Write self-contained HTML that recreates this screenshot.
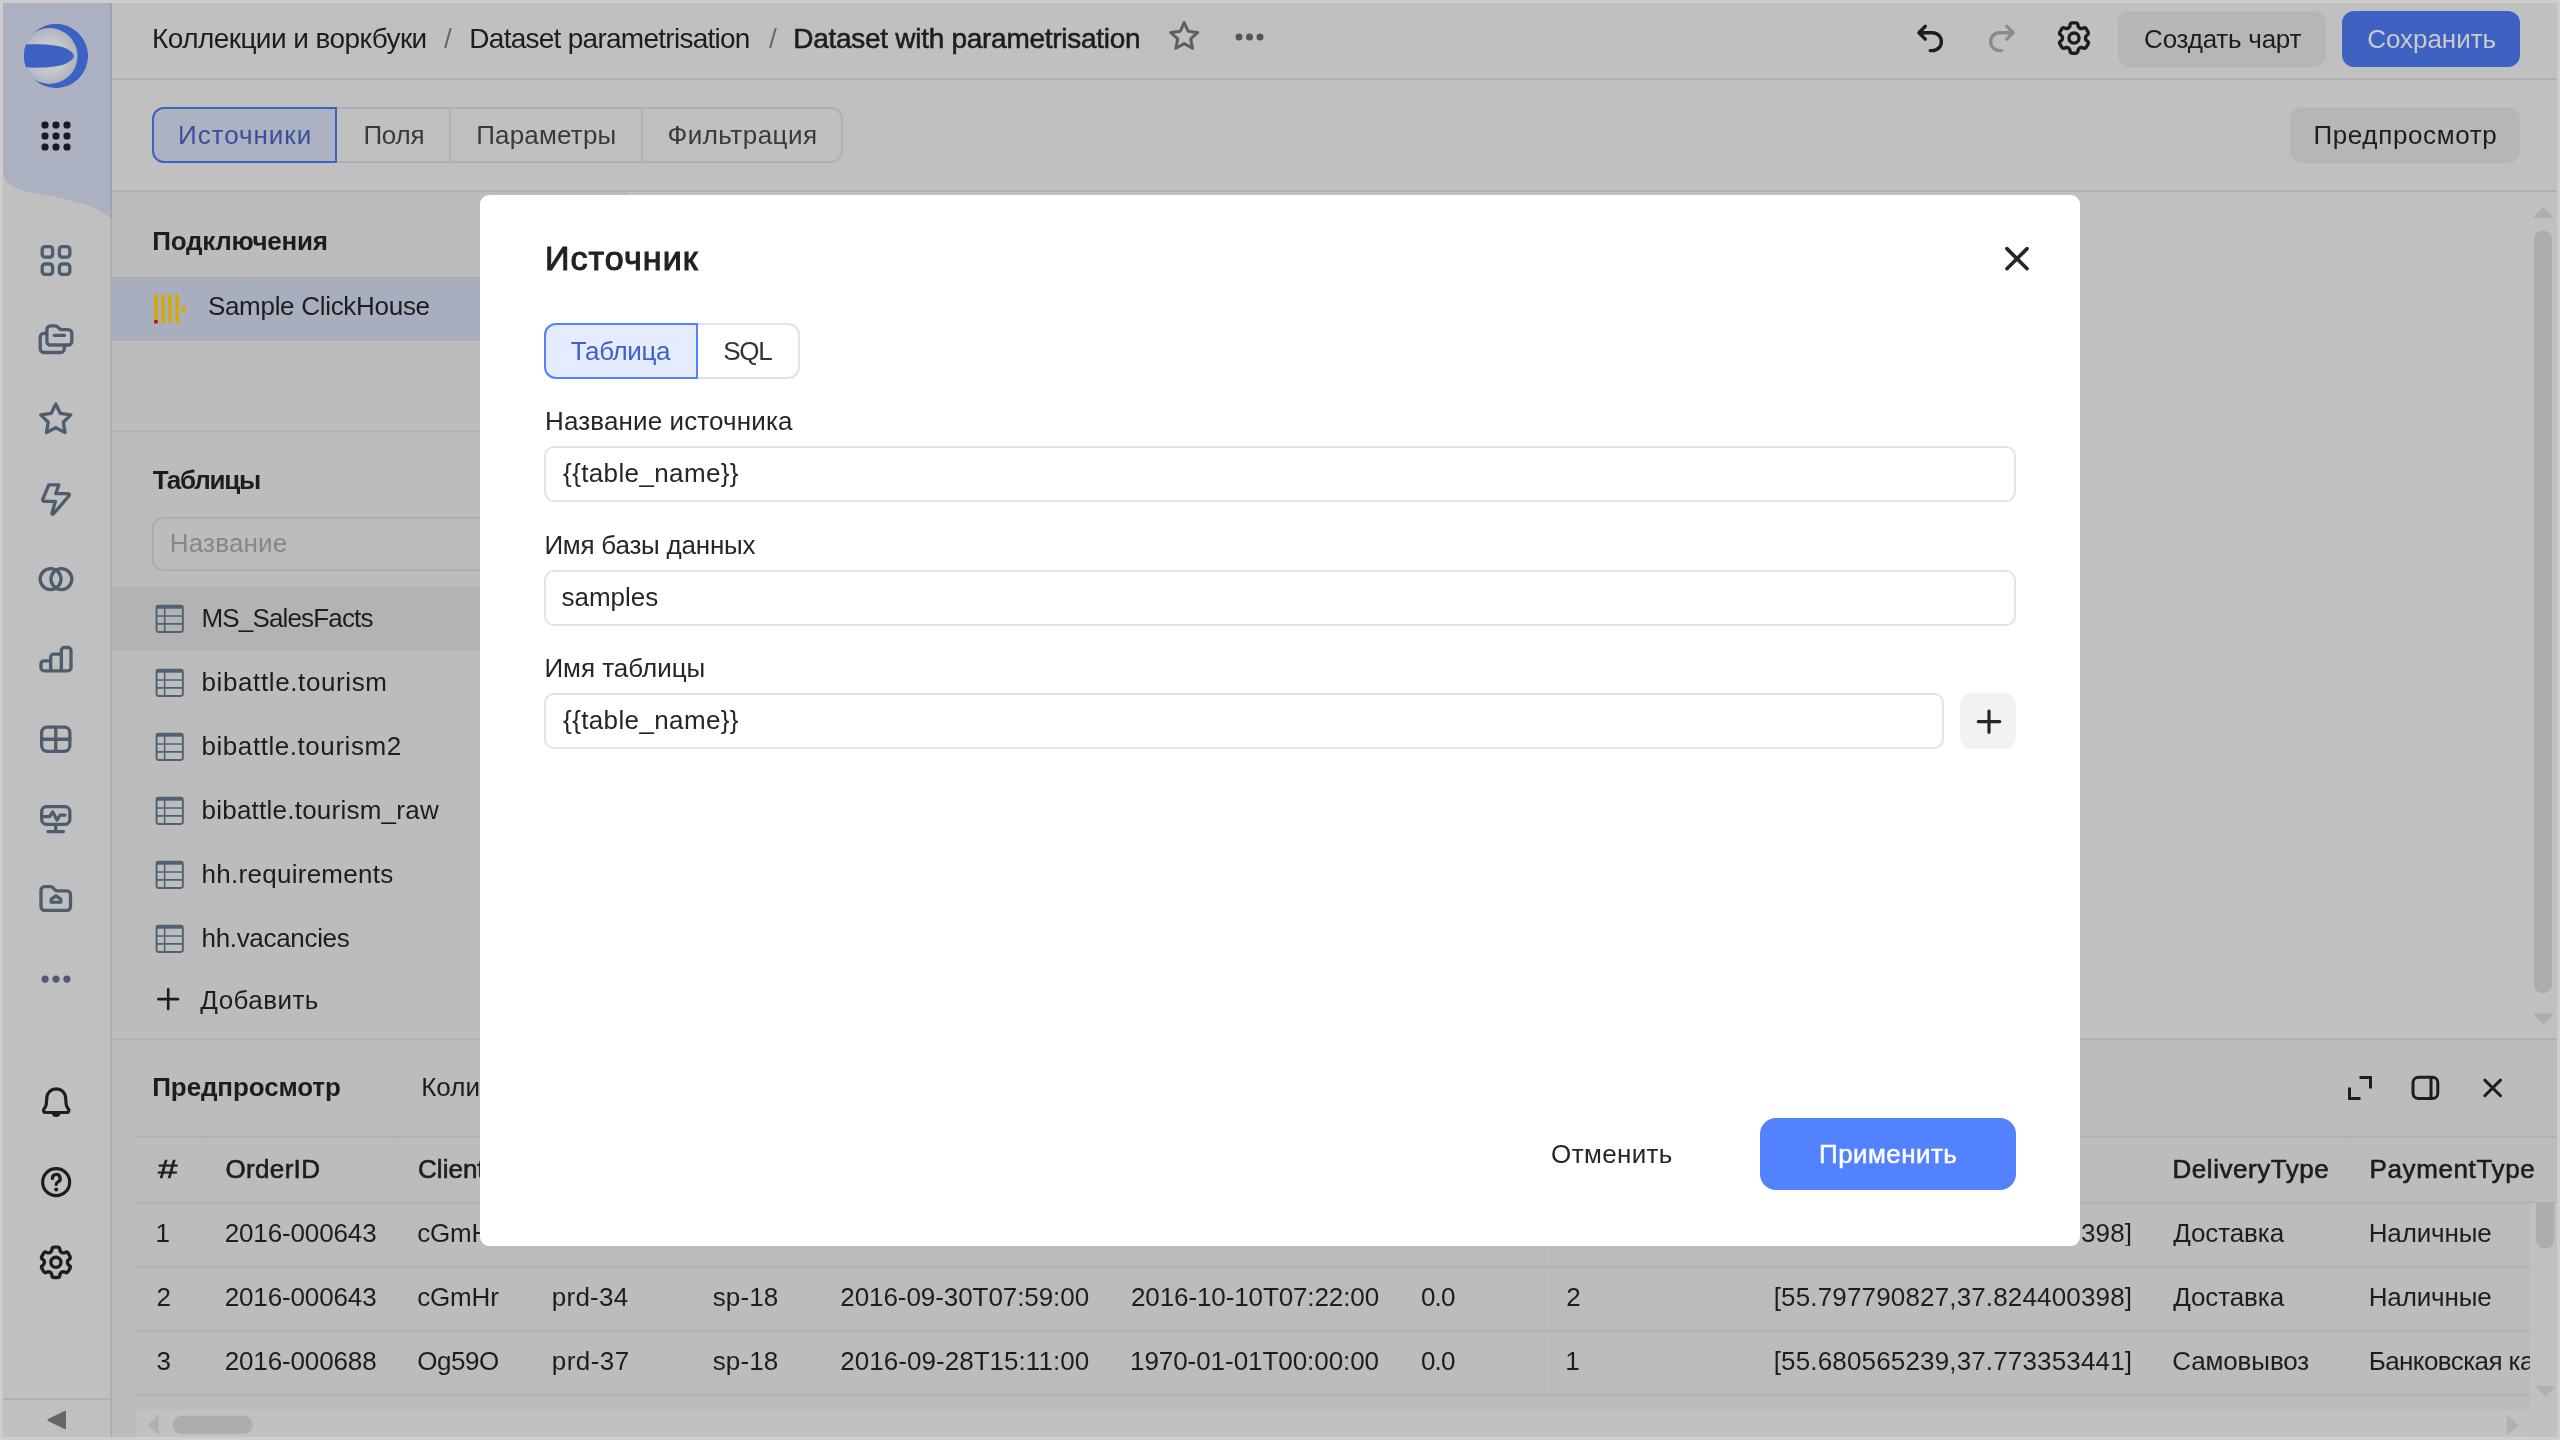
<!DOCTYPE html>
<html lang="ru">
<head>
<meta charset="utf-8">
<title>DataLens — Dataset with parametrisation</title>
<style>
html,body{margin:0;padding:0}
body{width:2560px;height:1440px;position:relative;overflow:hidden;background:#c0c0c0;font-family:"Liberation Sans",sans-serif;-webkit-font-smoothing:antialiased}
.a{position:absolute}
.t{position:absolute;white-space:pre;font-family:"Liberation Sans",sans-serif}
#app,#modal-layer,#frame{position:absolute;left:0;top:0;width:2560px;height:1440px}
#app{overflow:hidden}
.hl{position:absolute;height:2px;background:linear-gradient(#b7b7b7 50%,#adadad 50%)}
.hl2{position:absolute;height:2px;background:linear-gradient(#adadad 50%,#b8b8b8 50%)}
.vl{position:absolute;width:2px;background:#b2b2b2}
.btn{position:absolute;border-radius:12px;background:#b6b6b6}
svg{position:absolute;overflow:visible}
.ico{fill:none;stroke:#4d5c6e;stroke-width:3.3;stroke-linecap:round;stroke-linejoin:round}
.icd{fill:none;stroke:#1d1d1d;stroke-width:3.2;stroke-linecap:round;stroke-linejoin:round}
.inp{position:absolute;box-sizing:border-box;border:2px solid #e3e3e3;border-radius:10px;background:#fff}
</style>
</head>
<body>
<div id="app" style="will-change:transform">
<!-- ===== main backgrounds ===== -->
<div class="a" style="left:112px;top:192px;width:513px;height:848px;background:#bcbcbc"></div>
<div class="a" style="left:112px;top:1040px;width:2448px;height:400px;background:#bcbcbc"></div>

<!-- ===== aside ===== -->
<div class="a" style="left:0;top:0;width:111px;height:1440px;background:#c0c0c0"></div>
<svg class="a" style="left:0;top:0" width="112" height="1440" viewBox="0 0 112 1440">
  <defs>
    <radialGradient id="lg" cx="0.5" cy="0.5" r="0.55"><stop offset="0" stop-color="#cfcfcf"/><stop offset="0.55" stop-color="#c4c5c9"/><stop offset="1" stop-color="#a9aebd"/></radialGradient>
    <clipPath id="lc"><circle cx="56" cy="56" r="32.2"/></clipPath>
  </defs>
  <path d="M0 0H111V218.5C100 209 86 203.500 62 198.500C38 193.500 22 192 12 186C6 182 3 177 3 170V0Z" fill="#abb1c1"/>
  <rect x="110" y="0" width="1" height="218" fill="#a3a9b9"/><rect x="111" y="0" width="1" height="218" fill="#9aa0b0"/>
  <rect x="110" y="218" width="1" height="1222" fill="#b6b6b6"/><rect x="111" y="218" width="1" height="1222" fill="#ababab"/>
  <!-- logo -->
  <g clip-path="url(#lc)">
    <circle cx="56" cy="56" r="32.2" fill="#3e62c4"/>
    <circle cx="49.500" cy="56" r="28" fill="url(#lg)"/>
    <path d="M22 44.800C40 43.600 60 44.500 68 49.500C72 52 74 54 74 56C74 58 72 60 68 62.500C60 67.500 40 68.400 22 67.200Z" fill="#3e62c4"/>
  </g>
  <!-- 9 dots -->
  <g fill="#1a1a1a">
    <rect x="41.500" y="121.500" width="7" height="7" rx="3.100"/><rect x="52.500" y="121.500" width="7" height="7" rx="3.100"/><rect x="63.500" y="121.500" width="7" height="7" rx="3.100"/>
    <rect x="41.500" y="132.500" width="7" height="7" rx="3.100"/><rect x="52.500" y="132.500" width="7" height="7" rx="3.100"/><rect x="63.500" y="132.500" width="7" height="7" rx="3.100"/>
    <rect x="41.500" y="143.500" width="7" height="7" rx="3.100"/><rect x="52.500" y="143.500" width="7" height="7" rx="3.100"/><rect x="63.500" y="143.500" width="7" height="7" rx="3.100"/>
  </g>
  <!-- 1 grid of 4 -->
  <g class="ico">
    <rect x="42.200" y="246.700" width="10.400" height="10.400" rx="2.800"/><rect x="59.400" y="246.700" width="10.400" height="10.400" rx="2.800"/>
    <rect x="42.200" y="264" width="10.400" height="10.400" rx="2.800"/><rect x="59.400" y="264" width="10.400" height="10.400" rx="2.800"/>
  </g>
  <!-- 2 folders -->
  <g class="ico">
    <path d="M46.900 330V341.500a3.500 3.500 0 0 0 3.500 3.500H68.300a3.500 3.500 0 0 0 3.500-3.500V333.200a3.500 3.500 0 0 0-3.500-3.500H61.500a3 3 0 0 1-2.200-1l-1.700-1.800a3 3 0 0 0-2.200-1H50.400a3.500 3.500 0 0 0-3.500 3.500Z"/>
    <path d="M46 333.300H44a3.800 3.800 0 0 0-3.800 3.800V348.700a3.800 3.800 0 0 0 3.800 3.800H60.500a3.800 3.800 0 0 0 3.800-3.800V346"/>
    <path d="M54.300 335.300H64.500"/>
  </g>
  <!-- 3 star -->
  <path class="ico" d="M55.75 404.00L60.39 413.41L70.78 414.92L63.26 422.24L65.04 432.58L55.75 427.70L46.46 432.58L48.24 422.24L40.72 414.92L51.11 413.41Z"/>
  <!-- 4 bolt -->
  <path class="ico" d="M48.800 484.800H58.900L55.800 493.600H68Q70.200 494 68.900 495.900L53.600 513.800Q51.600 515 52.100 512.800L55.400 501.300H44Q42.200 500.900 42.800 499.100Z"/>
  <!-- 5 circles -->
  <g class="ico"><circle cx="50.600" cy="579.100" r="10.450"/><circle cx="61.400" cy="579.100" r="10.450"/></g>
  <!-- 6 bars -->
  <path class="ico" d="M41 663.800a3 3 0 0 1 3-3H50.700V657.200a3 3 0 0 1 3-3H61.300V650.500a3 3 0 0 1 3-3H68a3 3 0 0 1 3 3V667.800a3 3 0 0 1-3 3H44a3 3 0 0 1-3-3ZM50.700 660.800V670.800M61.300 654.200V670.800"/>
  <!-- 7 grid 2x2 -->
  <g class="ico"><rect x="41.650" y="727.150" width="28.200" height="24.200" rx="5.500"/><path d="M55.750 727.150V751.350M41.650 739.250H69.850"/></g>
  <!-- 8 display pulse -->
  <g class="ico"><rect x="41.650" y="806.650" width="28.200" height="17.700" rx="4.800"/><path d="M55.750 824.350V831.600M48 831.600H63.500M43 816.700H49.500L52.700 812L57 820L60.200 815.200H65"/></g>
  <!-- 9 folder house -->
  <g class="ico"><path d="M41 890.200a3.500 3.500 0 0 1 3.500-3.500H50.500a3.500 3.500 0 0 1 2.600 1.100l1.700 1.900a3.500 3.500 0 0 0 2.600 1.100H67a3.500 3.500 0 0 1 3.500 3.500V906.800a3.500 3.500 0 0 1-3.500 3.500H44.500a3.500 3.500 0 0 1-3.500-3.500Z"/><path d="M51.200 902.200V899.200L56 895.800L60.800 899.200V902.200Z"/></g>
  <!-- 10 dots -->
  <g fill="#4d5c6e"><circle cx="45.100" cy="979.100" r="3.600"/><circle cx="56" cy="979.100" r="3.600"/><circle cx="66.900" cy="979.100" r="3.600"/></g>
  <!-- bell -->
  <path class="icd" d="M56.200 1088.900c-5.300 0-9 3.900-9.400 8.800l-.5 6.200c-.2 2-.9 3.500-2.200 5-1.300 1.500-.4 3.600 1.600 3.600h21c2 0 2.900-2.100 1.600-3.600-1.300-1.500-2-3-2.200-5l-.5-6.200c-.4-4.900-4.100-8.800-9.400-8.800Z"/>
  <path d="M51.800 1113.500a4.500 4.500 0 0 0 8.800 0Z" fill="#1d1d1d"/>
  <!-- help -->
  <circle class="icd" cx="56.150" cy="1182.150" r="13.500"/>
  <path class="icd" d="M52.400 1178.400a3.900 3.900 0 1 1 5.600 3.500c-1.200.6-1.800 1.300-1.800 2.600"/>
  <circle cx="56.200" cy="1189.400" r="2" fill="#1d1d1d"/>
  <!-- gear -->
  <g transform="translate(37.900 1244.350) scale(2.25)"><path fill="#1d1d1d" fill-rule="evenodd" clip-rule="evenodd" d="M7.199 2H8.8a.2.2 0 0 1 .2.2c0 1.808 1.958 2.939 3.524 2.034a.199.199 0 0 1 .271.073l.802 1.388a.199.199 0 0 1-.073.272c-1.566.904-1.566 3.164 0 4.069a.199.199 0 0 1 .073.271l-.802 1.388a.199.199 0 0 1-.271.073C10.958 10.863 9 11.993 9 13.8a.2.2 0 0 1-.199.2H7.2a.199.199 0 0 1-.2-.2c0-1.808-1.958-2.938-3.524-2.034a.199.199 0 0 1-.272-.073l-.8-1.388a.199.199 0 0 1 .072-.271c1.566-.905 1.566-3.165 0-4.07a.199.199 0 0 1-.073-.27l.801-1.389a.199.199 0 0 1 .272-.072C5.042 5.138 7 4.007 7 2.199c0-.11.089-.199.199-.199ZM5.5 2.2c0-.94.76-1.7 1.699-1.700H8.800c.94 0 1.700.76 1.700 1.700a.85.85 0 0 0 1.274.735 1.699 1.699 0 0 1 2.320.622l.802 1.388c.469.813.19 1.851-.622 2.320a.85.85 0 0 0 0 1.472 1.700 1.700 0 0 1 .622 2.320l-.802 1.388a1.699 1.699 0 0 1-2.320.622.85.85 0 0 0-1.274.735c0 .939-.76 1.700-1.699 1.700H7.200a1.700 1.700 0 0 1-1.699-1.700.85.85 0 0 0-1.274-.735 1.698 1.698 0 0 1-2.320-.622l-.802-1.388a1.699 1.699 0 0 1 .622-2.320.85.85 0 0 0 0-1.471 1.699 1.699 0 0 1-.622-2.321l.801-1.388a1.699 1.699 0 0 1 2.320-.622A.85.85 0 0 0 5.500 2.200ZM9.500 8a1.500 1.500 0 1 1-3 0 1.500 1.500 0 0 1 3 0ZM11 8a3 3 0 1 1-6 0 3 3 0 0 1 6 0Z"/></g>
  <!-- footer -->
  <rect x="3" y="1398" width="108" height="1" fill="#b8b8b8"/><rect x="3" y="1399" width="108" height="1" fill="#aeaeae"/>
  <path d="M48.500 1420L65 1411.800V1428.200Z" fill="#666" stroke="#666" stroke-width="2" stroke-linejoin="round"/>
</svg>

<!-- ===== top bar ===== -->
<div class="hl" style="left:112px;top:78px;width:2448px"></div>
<div class="hl" style="left:112px;top:190px;width:2448px"></div>
<svg class="a" style="left:1160px;top:10px" width="120" height="56" viewBox="1160 10 120 56">
  <path d="M1184.20 22.60L1188.21 31.29L1197.71 32.41L1190.68 38.91L1192.55 48.29L1184.20 43.62L1175.85 48.29L1177.72 38.91L1170.69 32.41L1180.19 31.29Z" fill="none" stroke="#5f5f5f" stroke-width="3" stroke-linejoin="round"/>
  <g fill="#555"><circle cx="1239" cy="37" r="3.500"/><circle cx="1249.500" cy="37" r="3.500"/><circle cx="1260" cy="37" r="3.500"/></g>
</svg>
<!-- undo / redo / gear -->
<svg class="a" style="left:1910px;top:18px" width="116" height="42" viewBox="1910 18 116 42">
  <path d="M1925.300 26.300L1918.900 32.700L1925.300 39.100M1918.900 32.700H1932.400A8.950 8.950 0 0 1 1932.400 50.600H1930.200" fill="none" stroke="#1d1d1d" stroke-width="3.400" stroke-linecap="round" stroke-linejoin="round"/>
  <path d="M2006.800 26.300L2013.200 32.700L2006.800 39.100M2013.200 32.700H1999.600A8.950 8.950 0 0 0 1999.600 50.600H2001.700" fill="none" stroke="#8b8b8b" stroke-width="3.400" stroke-linecap="round" stroke-linejoin="round"/>
</svg>
<svg class="a" style="left:2055.800px;top:20.300px" width="36" height="36" viewBox="0 0 16 16"><path fill="#1d1d1d" fill-rule="evenodd" clip-rule="evenodd" d="M7.199 2H8.8a.2.2 0 0 1 .2.2c0 1.808 1.958 2.939 3.524 2.034a.199.199 0 0 1 .271.073l.802 1.388a.199.199 0 0 1-.073.272c-1.566.904-1.566 3.164 0 4.069a.199.199 0 0 1 .073.271l-.802 1.388a.199.199 0 0 1-.271.073C10.958 10.863 9 11.993 9 13.8a.2.2 0 0 1-.199.2H7.2a.199.199 0 0 1-.2-.2c0-1.808-1.958-2.938-3.524-2.034a.199.199 0 0 1-.272-.073l-.8-1.388a.199.199 0 0 1 .072-.271c1.566-.905 1.566-3.165 0-4.07a.199.199 0 0 1-.073-.27l.801-1.389a.199.199 0 0 1 .272-.072C5.042 5.138 7 4.007 7 2.199c0-.11.089-.199.199-.199ZM5.5 2.2c0-.94.76-1.7 1.699-1.700H8.800c.94 0 1.700.76 1.700 1.700a.85.85 0 0 0 1.274.735 1.699 1.699 0 0 1 2.320.622l.802 1.388c.469.813.19 1.851-.622 2.320a.85.85 0 0 0 0 1.472 1.700 1.700 0 0 1 .622 2.320l-.802 1.388a1.699 1.699 0 0 1-2.320.622.85.85 0 0 0-1.274.735c0 .939-.76 1.700-1.699 1.700H7.200a1.700 1.700 0 0 1-1.699-1.700.85.85 0 0 0-1.274-.735 1.698 1.698 0 0 1-2.320-.622l-.802-1.388a1.699 1.699 0 0 1 .622-2.320.85.85 0 0 0 0-1.471 1.699 1.699 0 0 1-.622-2.321l.801-1.388a1.699 1.699 0 0 1 2.320-.622A.85.85 0 0 0 5.500 2.200ZM9.500 8a1.500 1.500 0 1 1-3 0 1.500 1.500 0 0 1 3 0ZM11 8a3 3 0 1 1-6 0 3 3 0 0 1 6 0Z"/></svg>
<div class="btn" style="left:2118px;top:11px;width:208px;height:56px"></div>
<div class="btn" style="left:2342px;top:11px;width:178px;height:56px;background:#3e62c1"></div>
<div class="btn" style="left:2290px;top:107px;width:230px;height:56px"></div>
<!-- tabs -->
<div class="a" style="left:152px;top:107px;width:691px;height:56px;box-sizing:border-box;border:2px solid #b0b0b0;border-radius:12px"></div>
<div class="vl" style="left:449px;top:109px;height:52px;background:#b0b0b0"></div>
<div class="vl" style="left:641px;top:109px;height:52px;background:#b0b0b0"></div>
<div class="a" style="left:152px;top:107px;width:184.500px;height:56px;box-sizing:border-box;border:2px solid #3e62c1;border-radius:12px 0 0 12px;background:#acb2c2"></div>

<!-- ===== left panel ===== -->
<div class="vl" style="left:624.500px;top:192px;height:848px;width:1.500px;background:#b1b1b1"></div>
<div class="a" style="left:112px;top:277px;width:512.500px;height:63.500px;background:#a8aebe"></div>
<!-- clickhouse icon -->
<svg class="a" style="left:150px;top:290px" width="40" height="38" viewBox="150 290 40 38">
  <g fill="#d8a800"><rect x="154.200" y="294.400" width="3.400" height="29"/><rect x="161.300" y="294.400" width="3.400" height="29"/><rect x="168.400" y="294.400" width="3.400" height="29"/><rect x="175.400" y="294.400" width="3.400" height="29"/><rect x="181.700" y="305.800" width="3.400" height="6.800"/></g>
  <rect x="154.200" y="320" width="3.400" height="3.400" fill="#d30000"/>
</svg>
<div class="hl" style="left:112px;top:430px;width:512.500px"></div>
<div class="a" style="left:152px;top:516.500px;width:440px;height:54px;box-sizing:border-box;border:2px solid #adadad;border-radius:11px"></div>
<div class="a" style="left:112px;top:587px;width:512.500px;height:64px;background:#b3b3b3"></div>
<svg class="a" style="left:150px;top:600px" width="40" height="360" viewBox="150 600 40 360">
  <defs><g id="tbl" fill="none" stroke="#4f6275">
    <rect x="156.550" y="605.750" width="26.300" height="26.300" rx="2.200" stroke-width="1.900"/><rect x="156.500" y="605" width="26.400" height="3.700" fill="#4f6275" stroke="none"/><path d="M157 615.950H182.500M157 623.900H182.500M164.700 608V632" stroke-width="1.600"/></g></defs>
  <use href="#tbl"/><use href="#tbl" y="64"/><use href="#tbl" y="128"/><use href="#tbl" y="192"/><use href="#tbl" y="256"/><use href="#tbl" y="320"/>
</svg>
<svg class="a" style="left:155px;top:987px" width="26" height="26" viewBox="155 987 26 26"><path d="M168.200 989.300V1009M158.300 999.100H178.100" stroke="#1d1d1d" stroke-width="2.600" stroke-linecap="round" fill="none"/></svg>
<div class="hl" style="left:112px;top:1038px;width:2448px"></div>
<!-- main scrollbar -->
<svg class="a" style="left:2528px;top:196px" width="30" height="842" viewBox="2528 196 30 842">
  <path d="M2543.200 206.500L2553.600 218H2532.800Z" fill="#adadad"/>
  <rect x="2534" y="230.600" width="18" height="762.700" rx="9" fill="#adadad"/>
  <path d="M2543.500 1024.500L2554.200 1013.500H2532.800Z" fill="#adadad"/>
</svg>

<!-- ===== preview panel ===== -->
<svg class="a" style="left:2340px;top:1070px" width="170" height="36" viewBox="2340 1070 170 36">
  <g fill="none" stroke="#1d1d1d" stroke-width="3" stroke-linecap="round" stroke-linejoin="round">
    <path d="M2359.500 1077.500H2370.500V1088.500M2349.500 1087.500V1098.500H2360.500" stroke-linecap="butt" stroke-linejoin="miter"/>
    <rect x="2413" y="1077.300" width="24.800" height="21.200" rx="5.500"/><path d="M2431 1077.500V1098.500" stroke-linecap="butt"/>
    <path d="M2484.800 1080.100L2500.500 1095.700M2500.500 1080.100L2484.800 1095.700"/>
  </g>
</svg>
<!-- table lines -->
<div class="hl2" style="left:136px;top:1136px;width:2421px"></div>
<div class="hl2" style="left:136px;top:1202px;width:2421px"></div>
<div class="hl2" style="left:136px;top:1266px;width:2394px"></div>
<div class="hl2" style="left:136px;top:1330px;width:2394px"></div>
<div class="hl2" style="left:136px;top:1394px;width:2394px"></div>
<!-- column separators -->
<svg class="a" style="left:136px;top:1137px" width="2400" height="258" viewBox="136 1137 2400 258"><path d="M203.700 1137V1395M396.700 1137V1395M533.400 1137V1395M692.200 1137V1395M820.300 1137V1395M1111 1137V1395M1545.300 1137V1395M1753.800 1137V1395M2348.600 1137V1395" stroke="#bababa" stroke-width="1" fill="none"/></svg>
<!-- scrollbars -->
<div class="a" style="left:136px;top:1409.500px;width:2394px;height:28px;background:#c1c1c1"></div>
<div class="a" style="left:2530px;top:1202.500px;width:27px;height:235px;background:#c0c0c0"></div>
<svg class="a" style="left:136px;top:1200px" width="2424" height="240" viewBox="136 1200 2424 240">
  <path d="M148 1424.700L158.700 1414.200V1435.200Z" fill="#b0b0b0"/>
  <rect x="172.600" y="1415.800" width="80.200" height="18.200" rx="9.100" fill="#adadad"/>
  <path d="M2518.200 1425.300L2507 1414.800V1435.800Z" fill="#b0b0b0"/>
  <path d="M2536 1202.500H2554V1239.800A9 9 0 0 1 2536 1239.800Z" fill="#adadad"/>
  <path d="M2545.300 1396.500L2555.600 1386H2535Z" fill="#b0b0b0"/>
</svg>

<nav class="breadcrumbs" aria-label="Навигация">
<span class="t" style="left:152.1px;top:24.8px;font-size:28px;line-height:28px;color:#1d1d1d;letter-spacing:-0.579px;">Коллекции и воркбуки</span>
<span class="t" style="left:444.1px;top:24.8px;font-size:28px;line-height:28px;color:#6a6a6a;">/</span>
<span class="t" style="left:469.3px;top:24.8px;font-size:28px;line-height:28px;color:#1d1d1d;letter-spacing:-0.732px;">Dataset parametrisation</span>
<span class="t" style="left:769.1px;top:24.8px;font-size:28px;line-height:28px;color:#6a6a6a;">/</span>
<span class="t" style="left:793.3px;top:24.8px;font-size:28px;line-height:28px;color:#1d1d1d;letter-spacing:-0.281px;-webkit-text-stroke:0.55px #1d1d1d;">Dataset with parametrisation</span>
</nav>
<div class="dataset-tabs" role="radiogroup">
<span class="t" style="left:178.0px;top:122.3px;font-size:26px;line-height:26px;color:#36509c;letter-spacing:0.962px;">Источники</span>
<span class="t" style="left:363.4px;top:122.3px;font-size:26px;line-height:26px;color:#3a3a3a;letter-spacing:-0.233px;">Поля</span>
<span class="t" style="left:476.2px;top:122.3px;font-size:26px;line-height:26px;color:#3a3a3a;letter-spacing:0.188px;">Параметры</span>
<span class="t" style="left:667.5px;top:122.3px;font-size:26px;line-height:26px;color:#3a3a3a;letter-spacing:0.467px;">Фильтрация</span>
</div>
<div class="action-panel-buttons" role="toolbar">
<span class="t" style="left:2144.1px;top:26.4px;font-size:26px;line-height:26px;color:#1d1d1d;letter-spacing:-0.227px;">Создать чарт</span>
<span class="t" style="left:2367.2px;top:26.4px;font-size:26px;line-height:26px;color:#cbcbcd;letter-spacing:-0.038px;">Сохранить</span>
<span class="t" style="left:2313.4px;top:122.3px;font-size:26px;line-height:26px;color:#1d1d1d;letter-spacing:0.645px;">Предпросмотр</span>
</div>
<section class="sources-panel" aria-label="Источники">
<span class="t" style="left:152.3px;top:227.9px;font-size:26px;line-height:26px;color:#1d1d1d;font-weight:700;letter-spacing:-0.270px;">Подключения</span>
<span class="t" style="left:207.9px;top:292.9px;font-size:26px;line-height:26px;color:#1d1d1d;letter-spacing:-0.294px;">Sample ClickHouse</span>
<span class="t" style="left:152.8px;top:467.3px;font-size:26px;line-height:26px;color:#1d1d1d;font-weight:700;letter-spacing:-1.217px;">Таблицы</span>
<span class="t" style="left:169.8px;top:529.6px;font-size:26px;line-height:26px;color:#878787;letter-spacing:0.186px;">Название</span>
<span class="t" style="left:201.5px;top:604.6px;font-size:26px;line-height:26px;color:#1d1d1d;letter-spacing:-0.842px;">MS_SalesFacts</span>
<span class="t" style="left:201.5px;top:668.6px;font-size:26px;line-height:26px;color:#1d1d1d;letter-spacing:0.613px;">bibattle.tourism</span>
<span class="t" style="left:201.5px;top:732.6px;font-size:26px;line-height:26px;color:#1d1d1d;letter-spacing:0.556px;">bibattle.tourism2</span>
<span class="t" style="left:201.5px;top:796.6px;font-size:26px;line-height:26px;color:#1d1d1d;letter-spacing:0.237px;">bibattle.tourism_raw</span>
<span class="t" style="left:201.5px;top:860.6px;font-size:26px;line-height:26px;color:#1d1d1d;letter-spacing:0.279px;">hh.requirements</span>
<span class="t" style="left:201.5px;top:924.6px;font-size:26px;line-height:26px;color:#1d1d1d;letter-spacing:-0.318px;">hh.vacancies</span>
<span class="t" style="left:200.3px;top:986.9px;font-size:26px;line-height:26px;color:#1d1d1d;letter-spacing:0.443px;">Добавить</span>
</section>
<div class="preview-header">
<span class="t" style="left:152.3px;top:1074.3px;font-size:26px;line-height:26px;color:#1d1d1d;font-weight:700;letter-spacing:-0.118px;">Предпросмотр</span>
<span class="t" style="left:421.2px;top:1074.3px;font-size:26px;line-height:26px;color:#1d1d1d;">Количество строк</span>
</div>
<div class="preview-table-head" role="row">
<span class="t" style="left:158.2px;top:1155.7px;font-size:26px;line-height:26px;color:#1d1d1d;-webkit-text-stroke:0.6px #1d1d1d;transform:scaleX(1.347);transform-origin:0.0px 50%;">#</span>
<span class="t" style="left:225.5px;top:1155.7px;font-size:26px;line-height:26px;color:#1d1d1d;letter-spacing:0.333px;-webkit-text-stroke:0.6px #1d1d1d;">OrderID</span>
<span class="t" style="left:418.1px;top:1155.7px;font-size:26px;line-height:26px;color:#1d1d1d;-webkit-text-stroke:0.6px #1d1d1d;">ClientID</span>
<span class="t" style="left:552.6px;top:1155.7px;font-size:26px;line-height:26px;color:#1d1d1d;-webkit-text-stroke:0.6px #1d1d1d;">ProductID</span>
<span class="t" style="left:712.6px;top:1155.7px;font-size:26px;line-height:26px;color:#1d1d1d;-webkit-text-stroke:0.6px #1d1d1d;">Brand</span>
<span class="t" style="left:841.1px;top:1155.7px;font-size:26px;line-height:26px;color:#1d1d1d;-webkit-text-stroke:0.6px #1d1d1d;">OrderDatetime</span>
<span class="t" style="left:1130.8px;top:1155.7px;font-size:26px;line-height:26px;color:#1d1d1d;-webkit-text-stroke:0.6px #1d1d1d;">DeliveryDatetime</span>
<span class="t" style="left:1420.8px;top:1155.7px;font-size:26px;line-height:26px;color:#1d1d1d;-webkit-text-stroke:0.6px #1d1d1d;">Price</span>
<span class="t" style="left:1566.1px;top:1155.7px;font-size:26px;line-height:26px;color:#1d1d1d;-webkit-text-stroke:0.6px #1d1d1d;">ProductCount</span>
<span class="t" style="left:1774.5px;top:1155.7px;font-size:26px;line-height:26px;color:#1d1d1d;-webkit-text-stroke:0.6px #1d1d1d;">DeliveryAddressCoord</span>
<span class="t" style="left:2172.5px;top:1155.7px;font-size:26px;line-height:26px;color:#1d1d1d;letter-spacing:0.545px;-webkit-text-stroke:0.6px #1d1d1d;">DeliveryType</span>
<span class="t" style="left:2369.5px;top:1155.7px;font-size:26px;line-height:26px;color:#1d1d1d;letter-spacing:0.620px;-webkit-text-stroke:0.6px #1d1d1d;">PaymentType</span>
</div>
<div class="preview-table-body" role="rowgroup">
<span class="t" style="left:155.4px;top:1219.6px;font-size:26px;line-height:26px;color:#1d1d1d;overflow:hidden;height:26px;">1</span>
<span class="t" style="left:224.7px;top:1219.6px;font-size:26px;line-height:26px;color:#1d1d1d;letter-spacing:-0.130px;overflow:hidden;height:26px;">2016-000643</span>
<span class="t" style="left:417.3px;top:1219.6px;font-size:26px;line-height:26px;color:#1d1d1d;letter-spacing:-0.200px;overflow:hidden;height:26px;">cGmHr</span>
<span class="t" style="left:551.8px;top:1219.6px;font-size:26px;line-height:26px;color:#1d1d1d;letter-spacing:0.240px;overflow:hidden;height:26px;">prd-34</span>
<span class="t" style="left:712.8px;top:1219.6px;font-size:26px;line-height:26px;color:#1d1d1d;letter-spacing:0.075px;overflow:hidden;height:26px;">sp-18</span>
<span class="t" style="left:840.3px;top:1219.6px;font-size:26px;line-height:26px;color:#1d1d1d;letter-spacing:-0.072px;overflow:hidden;height:26px;">2016-09-30T07:59:00</span>
<span class="t" style="left:1131.0px;top:1219.6px;font-size:26px;line-height:26px;color:#1d1d1d;letter-spacing:-0.111px;overflow:hidden;height:26px;">2016-10-10T07:22:00</span>
<span class="t" style="left:1421.0px;top:1219.6px;font-size:26px;line-height:26px;color:#1d1d1d;letter-spacing:-0.850px;overflow:hidden;height:26px;">0.0</span>
<span class="t" style="left:1566.3px;top:1219.6px;font-size:26px;line-height:26px;color:#1d1d1d;overflow:hidden;height:26px;">2</span>
<span class="t" style="left:1773.7px;top:1219.6px;font-size:26px;line-height:26px;color:#1d1d1d;letter-spacing:0.158px;overflow:hidden;height:26px;">[55.797790827,37.824400398]</span>
<span class="t" style="left:2173.2px;top:1219.6px;font-size:26px;line-height:26px;color:#1d1d1d;letter-spacing:-0.100px;overflow:hidden;height:26px;">Доставка</span>
<span class="t" style="left:2368.7px;top:1219.6px;font-size:26px;line-height:26px;color:#1d1d1d;letter-spacing:-0.129px;width:161.3px;overflow:hidden;overflow:hidden;height:26px;">Наличные</span>
<span class="t" style="left:156.4px;top:1283.6px;font-size:26px;line-height:26px;color:#1d1d1d;">2</span>
<span class="t" style="left:224.7px;top:1283.6px;font-size:26px;line-height:26px;color:#1d1d1d;letter-spacing:-0.130px;">2016-000643</span>
<span class="t" style="left:417.3px;top:1283.6px;font-size:26px;line-height:26px;color:#1d1d1d;letter-spacing:-0.200px;">cGmHr</span>
<span class="t" style="left:551.8px;top:1283.6px;font-size:26px;line-height:26px;color:#1d1d1d;letter-spacing:0.240px;">prd-34</span>
<span class="t" style="left:712.8px;top:1283.6px;font-size:26px;line-height:26px;color:#1d1d1d;letter-spacing:0.075px;">sp-18</span>
<span class="t" style="left:840.3px;top:1283.6px;font-size:26px;line-height:26px;color:#1d1d1d;letter-spacing:-0.072px;">2016-09-30T07:59:00</span>
<span class="t" style="left:1131.0px;top:1283.6px;font-size:26px;line-height:26px;color:#1d1d1d;letter-spacing:-0.111px;">2016-10-10T07:22:00</span>
<span class="t" style="left:1421.0px;top:1283.6px;font-size:26px;line-height:26px;color:#1d1d1d;letter-spacing:-0.850px;">0.0</span>
<span class="t" style="left:1566.3px;top:1283.6px;font-size:26px;line-height:26px;color:#1d1d1d;">2</span>
<span class="t" style="left:1773.7px;top:1283.6px;font-size:26px;line-height:26px;color:#1d1d1d;letter-spacing:0.158px;">[55.797790827,37.824400398]</span>
<span class="t" style="left:2173.2px;top:1283.6px;font-size:26px;line-height:26px;color:#1d1d1d;letter-spacing:-0.100px;">Доставка</span>
<span class="t" style="left:2368.7px;top:1283.6px;font-size:26px;line-height:26px;color:#1d1d1d;letter-spacing:-0.129px;width:161.3px;overflow:hidden;">Наличные</span>
<span class="t" style="left:156.4px;top:1347.6px;font-size:26px;line-height:26px;color:#1d1d1d;">3</span>
<span class="t" style="left:224.7px;top:1347.6px;font-size:26px;line-height:26px;color:#1d1d1d;letter-spacing:-0.130px;">2016-000688</span>
<span class="t" style="left:417.3px;top:1347.6px;font-size:26px;line-height:26px;color:#1d1d1d;letter-spacing:-0.450px;">Og59O</span>
<span class="t" style="left:551.8px;top:1347.6px;font-size:26px;line-height:26px;color:#1d1d1d;letter-spacing:0.440px;">prd-37</span>
<span class="t" style="left:712.8px;top:1347.6px;font-size:26px;line-height:26px;color:#1d1d1d;letter-spacing:0.075px;">sp-18</span>
<span class="t" style="left:840.3px;top:1347.6px;font-size:26px;line-height:26px;color:#1d1d1d;letter-spacing:0.039px;">2016-09-28T15:11:00</span>
<span class="t" style="left:1130.0px;top:1347.6px;font-size:26px;line-height:26px;color:#1d1d1d;letter-spacing:-0.056px;">1970-01-01T00:00:00</span>
<span class="t" style="left:1421.0px;top:1347.6px;font-size:26px;line-height:26px;color:#1d1d1d;letter-spacing:-0.850px;">0.0</span>
<span class="t" style="left:1565.3px;top:1347.6px;font-size:26px;line-height:26px;color:#1d1d1d;">1</span>
<span class="t" style="left:1773.7px;top:1347.6px;font-size:26px;line-height:26px;color:#1d1d1d;letter-spacing:0.158px;">[55.680565239,37.773353441]</span>
<span class="t" style="left:2172.2px;top:1347.6px;font-size:26px;line-height:26px;color:#1d1d1d;letter-spacing:-0.112px;">Самовывоз</span>
<span class="t" style="left:2368.7px;top:1347.6px;font-size:26px;line-height:26px;color:#1d1d1d;letter-spacing:-0.580px;width:161.3px;overflow:hidden;">Банковская карта</span>
</div>
</div>

<div id="modal-layer" style="will-change:transform">
<!-- ===== modal ===== -->
<div class="a" style="left:480px;top:195px;width:1600px;height:1051px;background:#fff;border-radius:9px"></div>
<svg class="a" style="left:2000px;top:242px" width="34" height="34" viewBox="2000 242 34 34"><path d="M2006.900 248.600L2027.100 268.700M2027.100 248.600L2006.900 268.700" stroke="#262626" stroke-width="3.600" stroke-linecap="round" fill="none"/></svg>
<!-- radio -->
<div class="a" style="left:544px;top:323px;width:256px;height:56px;box-sizing:border-box;border:2px solid #e3e3e3;border-radius:12px"></div>
<div class="a" style="left:544px;top:323px;width:154px;height:56px;box-sizing:border-box;border:2px solid #5282ff;border-radius:12px 0 0 12px;background:#e5ecff"></div>
<!-- inputs -->
<div class="inp" style="left:544px;top:446px;width:1472px;height:56px"></div>
<div class="inp" style="left:544px;top:569.500px;width:1472px;height:56px"></div>
<div class="inp" style="left:544px;top:693px;width:1400px;height:56px"></div>
<div class="a" style="left:1960px;top:693px;width:56px;height:56px;border-radius:12px;background:#f2f2f2"></div>
<svg class="a" style="left:1970px;top:703px" width="36" height="36" viewBox="1970 703 36 36"><path d="M1989 711V732.300M1978.300 721.600H1999.700" stroke="#262626" stroke-width="3.200" stroke-linecap="round" fill="none"/></svg>
<!-- footer -->
<div class="a" style="left:1760px;top:1118px;width:256px;height:72px;border-radius:16px;background:#5282ff"></div>

<header class="dialog-header">
<span class="t" style="left:545.0px;top:240.9px;font-size:34px;line-height:34px;color:#222222;letter-spacing:1.071px;-webkit-text-stroke:1.1px #222222;">Источник</span>
</header>
<div class="dialog-source-type" role="radiogroup">
<span class="t" style="left:570.7px;top:337.9px;font-size:26px;line-height:26px;color:#3d61cb;letter-spacing:-0.367px;">Таблица</span>
<span class="t" style="left:723.3px;top:337.9px;font-size:26px;line-height:26px;color:#333333;letter-spacing:-1.300px;">SQL</span>
</div>
<form class="dialog-form" onsubmit="return false">
<span class="t" style="left:545.0px;top:407.9px;font-size:26px;line-height:26px;color:#262626;letter-spacing:0.129px;">Название источника</span>
<span class="t" style="left:563.1px;top:460.4px;font-size:26px;line-height:26px;color:#262626;letter-spacing:0.369px;">{{table_name}}</span>
<span class="t" style="left:544.4px;top:531.9px;font-size:26px;line-height:26px;color:#262626;letter-spacing:-0.221px;">Имя базы данных</span>
<span class="t" style="left:561.5px;top:583.9px;font-size:26px;line-height:26px;color:#262626;letter-spacing:-0.017px;">samples</span>
<span class="t" style="left:544.4px;top:654.9px;font-size:26px;line-height:26px;color:#262626;letter-spacing:-0.010px;">Имя таблицы</span>
<span class="t" style="left:563.1px;top:706.9px;font-size:26px;line-height:26px;color:#262626;letter-spacing:0.369px;">{{table_name}}</span>
</form>
<footer class="dialog-footer">
<span class="t" style="left:1551.1px;top:1140.6px;font-size:26px;line-height:26px;color:#262626;letter-spacing:0.343px;">Отменить</span>
<span class="t" style="left:1819.0px;top:1140.6px;font-size:26px;line-height:26px;color:#ffffff;letter-spacing:0.438px;-webkit-text-stroke:0.5px #ffffff;">Применить</span>
</footer>
</div>
<div id="frame" style="box-sizing:border-box;border:3px solid #cecece;pointer-events:none"></div>
</body>
</html>
